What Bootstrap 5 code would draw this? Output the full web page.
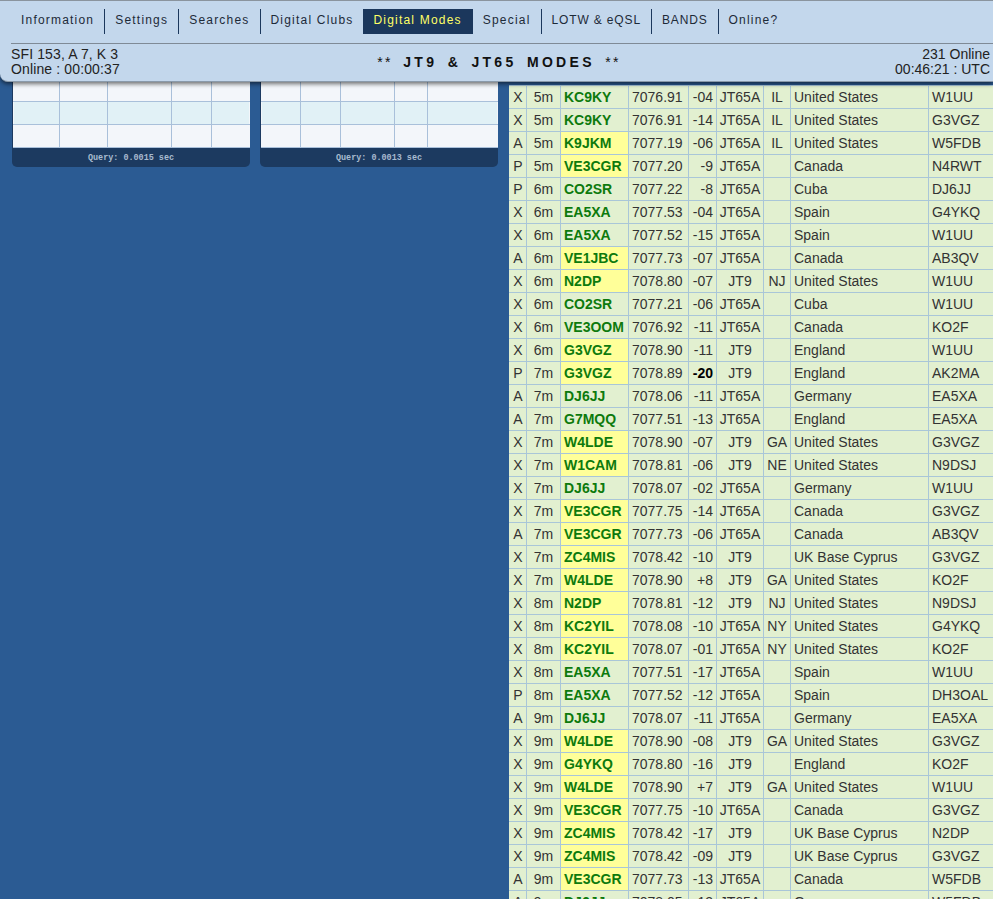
<!DOCTYPE html>
<html lang="en">
<head>
    <meta charset="UTF-8">
    <meta name="viewport" content="width=device-width, initial-scale=1.0">
    <title>JT9 & JT65 Modes</title>
    <link href="https://cdn.jsdelivr.net/npm/bootstrap@5.3.0/dist/css/bootstrap.min.css" rel="stylesheet">
    <style>
        html, body { height: 899px; overflow: hidden; }
        body { background: #2b5b93; font-family: "Liberation Sans", Arial, sans-serif; font-size: 14px; color: #333; }

        .top-bar { position: absolute; top: 0; left: 0; right: 0; height: 82px; background: #c3d7ec; border-top: 1px solid #8a949e; border-bottom: 1px solid #8a9aaa; border-radius: 0 0 0 8px; box-shadow: 0 2px 4px rgba(0,0,0,.55); z-index: 10; padding: 8px 3px 0 11px; color: #222; }
        .menu-link { display: block; height: 25px; line-height: 22px; padding: 0 10px; font-size: 12px; letter-spacing: 1.2px; color: #1d2a38; text-decoration: none; border-right: 1px solid #1b375c; white-space: nowrap; }
        .menu-link.no-sep { border-right: 0; }
        .menu-link.current { background: #1b375c; color: #ffff66; border-right: 0; padding-right: 11px; }
        .menu-link.caps { letter-spacing: .85px; }
        .menu-rule { border-top: 1px solid #7f8a96; margin: 9px -3px 0 0; }
        .status-row { line-height: 15px; padding-top: 3px; color: #222; }
        .status-side { width: 240px; }
        .status-side.left-info { letter-spacing: .13px; }
        .page-title { font-size: 14px; font-weight: 700; letter-spacing: 3.3px; color: #111; word-spacing: 3.2px; padding-top: 8px; margin-left: -3px; }
        .page-title span { font-weight: 400; letter-spacing: 2.4px; }

        .left-side { width: 509px; flex: none; padding: 78px 0 0 12px; gap: 10px; }
        .mini-panel { width: 238px; border-radius: 0 0 5px 5px; overflow: hidden; background: #1c3a60; padding: 0 1px; }
        .mini-grid { table-layout: fixed; width: 236px; border-collapse: collapse; }
        .mini-grid td { height: 23px; border: 1px solid #a9c0da; padding: 0; background: #f3f6fa; }
        .mini-grid td:first-child { border-left-color: #f3f6fa; }
        .mini-grid td:last-child { border-right-color: #f3f6fa; }
        .mini-grid tr:nth-child(even) td { background: #e1f1f6; }
        .mini-foot { height: 19px; line-height: 21px; text-align: center; font-family: "Liberation Mono", monospace; font-size: 8.45px; font-weight: 700; color: #a9bbcf; }

        .right-side { flex: none; width: 520px; padding-top: 85px; }
        .spot-table { table-layout: fixed; width: 520px; border-collapse: collapse; margin: 0; }
        .spot-table td { height: 23px; padding: 0 3px; line-height: 22px; background: #e2f0d0; border: 1px solid #a9c6d8; color: #333; font-size: 14px; white-space: nowrap; overflow: hidden; }
        .spot-table td:first-child { border-left-color: #e2f0d0; }
        .spot-table td.call { font-weight: 700; color: #0d7a0d; }
        .spot-table td.call.rare { background: #ffff99; }
        .spot-table td.loud { font-weight: 700; color: #000; }
    </style>
</head>
<body>
<div class="top-bar">
    <div class="d-flex">
        <a class="menu-link" href="#">Information</a>
        <a class="menu-link" href="#">Settings</a>
        <a class="menu-link" href="#">Searches</a>
        <a class="menu-link no-sep" href="#">Digital Clubs</a>
        <a class="menu-link current" href="#">Digital Modes</a>
        <a class="menu-link" href="#">Special</a>
        <a class="menu-link caps" href="#">LOTW &amp; eQSL</a>
        <a class="menu-link caps" href="#">BANDS</a>
        <a class="menu-link no-sep" href="#">Online?</a>
    </div>
    <div class="menu-rule"></div>
    <div class="status-row d-flex justify-content-between">
        <div class="status-side left-info">SFI 153, A 7, K 3<br>Online : 00:00:37</div>
        <div class="page-title text-center"><span>**</span> JT9 &amp; JT65 MODES <span>**</span></div>
        <div class="status-side text-end">231 Online<br>00:46:21 : UTC</div>
    </div>
</div>

<div class="d-flex">
    <div class="left-side d-flex align-items-start">
        <div class="mini-panel">
            <table class="mini-grid" id="gridA"></table>
            <div class="mini-foot">Query: 0.0015 sec</div>
        </div>
        <div class="mini-panel">
            <table class="mini-grid" id="gridB"></table>
            <div class="mini-foot">Query: 0.0013 sec</div>
        </div>
    </div>
    <div class="right-side">
        <table class="spot-table">
            <colgroup>
                <col style="width:17px"><col style="width:34px"><col style="width:68px"><col style="width:60px"><col style="width:28px"><col style="width:47px"><col style="width:27px"><col style="width:138px"><col style="width:101px">
            </colgroup>
            <tbody id="spotList"></tbody>
        </table>
    </div>
</div>

<script>
    // type|age|call|rare|freq|db|mode|state|country|spotter
    const spots = `X|5m|KC9KY|0|7076.91|-04|JT65A|IL|United States|W1UU
X|5m|KC9KY|0|7076.91|-14|JT65A|IL|United States|G3VGZ
A|5m|K9JKM|1|7077.19|-06|JT65A|IL|United States|W5FDB
P|5m|VE3CGR|1|7077.20|-9|JT65A||Canada|N4RWT
P|6m|CO2SR|0|7077.22|-8|JT65A||Cuba|DJ6JJ
X|6m|EA5XA|0|7077.53|-04|JT65A||Spain|G4YKQ
X|6m|EA5XA|0|7077.52|-15|JT65A||Spain|W1UU
A|6m|VE1JBC|1|7077.73|-07|JT65A||Canada|AB3QV
X|6m|N2DP|1|7078.80|-07|JT9|NJ|United States|W1UU
X|6m|CO2SR|0|7077.21|-06|JT65A||Cuba|W1UU
X|6m|VE3OOM|0|7076.92|-11|JT65A||Canada|KO2F
X|6m|G3VGZ|1|7078.90|-11|JT9||England|W1UU
P|7m|G3VGZ|1|7078.89|-20|JT9||England|AK2MA
A|7m|DJ6JJ|0|7078.06|-11|JT65A||Germany|EA5XA
A|7m|G7MQQ|0|7077.51|-13|JT65A||England|EA5XA
X|7m|W4LDE|1|7078.90|-07|JT9|GA|United States|G3VGZ
X|7m|W1CAM|1|7078.81|-06|JT9|NE|United States|N9DSJ
X|7m|DJ6JJ|0|7078.07|-02|JT65A||Germany|W1UU
X|7m|VE3CGR|1|7077.75|-14|JT65A||Canada|G3VGZ
A|7m|VE3CGR|1|7077.73|-06|JT65A||Canada|AB3QV
X|7m|ZC4MIS|1|7078.42|-10|JT9||UK Base Cyprus|G3VGZ
X|7m|W4LDE|1|7078.90|+8|JT9|GA|United States|KO2F
X|8m|N2DP|1|7078.81|-12|JT9|NJ|United States|N9DSJ
X|8m|KC2YIL|1|7078.08|-10|JT65A|NY|United States|G4YKQ
X|8m|KC2YIL|1|7078.07|-01|JT65A|NY|United States|KO2F
X|8m|EA5XA|0|7077.51|-17|JT65A||Spain|W1UU
P|8m|EA5XA|0|7077.52|-12|JT65A||Spain|DH3OAL
A|9m|DJ6JJ|0|7078.07|-11|JT65A||Germany|EA5XA
X|9m|W4LDE|1|7078.90|-08|JT9|GA|United States|G3VGZ
X|9m|G4YKQ|1|7078.80|-16|JT9||England|KO2F
X|9m|W4LDE|1|7078.90|+7|JT9|GA|United States|W1UU
X|9m|VE3CGR|1|7077.75|-10|JT65A||Canada|G3VGZ
X|9m|ZC4MIS|1|7078.42|-17|JT9||UK Base Cyprus|N2DP
X|9m|ZC4MIS|1|7078.42|-09|JT9||UK Base Cyprus|G3VGZ
A|9m|VE3CGR|1|7077.73|-13|JT65A||Canada|W5FDB
A|9m|DJ6JJ|0|7078.05|-13|JT65A||Germany|W5FDB`.split('\n');

    let spotList = document.getElementById('spotList');
    spots.forEach(line => {
        let s = line.split('|');
        spotList.innerHTML += `<tr>
            <td class="text-center px-0">${s[0]}</td>
            <td class="text-center px-0">${s[1]}</td>
            <td class="call${s[3] === '1' ? ' rare' : ''}">${s[2]}</td>
            <td>${s[4]}</td>
            <td class="text-end${s[5] === '-20' ? ' loud' : ''}">${s[5]}</td>
            <td class="text-center px-0">${s[6]}</td>
            <td class="text-center px-0">${s[7]}</td>
            <td>${s[8]}</td>
            <td>${s[9]}</td>
        </tr>`;
    });

    // empty rows of the two small panels, only the bottom of them is visible
    const fillGrid = (id, widths) => {
        let cols = widths.map(w => `<col style="width:${w}px">`).join('');
        let row = '<tr>' + widths.map(() => '<td></td>').join('') + '</tr>';
        document.getElementById(id).innerHTML = `<colgroup>${cols}</colgroup>` + row + row + row;
    };
    fillGrid('gridA', [46, 48, 64, 40, 38]);
    fillGrid('gridB', [39, 40, 54, 33, 70]);
</script>
<script src="https://cdn.jsdelivr.net/npm/bootstrap@5.3.0/dist/js/bootstrap.bundle.min.js"></script>
</body>
</html>
